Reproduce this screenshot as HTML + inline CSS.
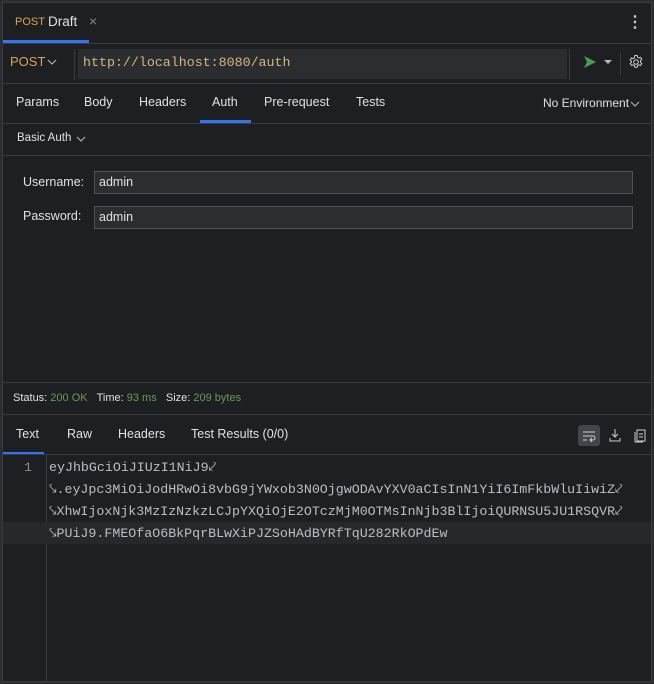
<!DOCTYPE html>
<html><head><style>
*{margin:0;padding:0;box-sizing:border-box}
body{width:654px;height:684px;background:#2b2d30;position:relative;overflow:hidden;font-family:"Liberation Sans",sans-serif;font-size:12.5px;color:#dfe1e5}
#f{position:absolute;left:2px;top:2px;width:650px;height:680px;background:#1e1f22;border:1px solid #393b40}
.a{position:absolute}
.hl{position:absolute;left:0;right:0;height:1px;background:#393b40}
.t{position:absolute;white-space:nowrap}
.mono{font-family:"Liberation Mono",monospace;font-size:13.3px}
.in{position:absolute;left:91px;width:539px;height:23px;background:#2b2d30;border:1px solid #4e5157;padding:3px 0 0 4px;font-size:12.5px}
.g{color:#6a9955}
.cl{position:absolute;left:46px;color:#bcbec4;white-space:nowrap}
</style></head><body><div id="f">
<div class="t" style="left:12px;top:13px;font-size:11px;color:#d5a553">POST</div>
<div class="t" style="left:45px;top:11px;font-size:13.5px">Draft</div>
<div class="t" style="left:86px;top:10px;color:#888;font-size:14px">×</div>
<div class="t" style="left:624px;top:9px;color:#ccc;font-size:16px;font-weight:bold">⋮</div>
<div class="a" style="left:0;top:37px;width:86px;height:3px;background:#3574f0"></div>
<div class="hl" style="top:40px"></div>
<div class="t" style="left:7px;top:51px;font-size:13px;color:#d5a553">POST</div>
<svg class="a" style="left:44px;top:55px" width="10" height="8"><path d="M1 2l4 4 4-4" stroke="#bbb" fill="none"/></svg>
<div class="a" style="left:71px;top:46px;width:1px;height:31px;background:#393b40"></div>
<div class="a" style="left:75px;top:46px;width:489px;height:30px;background:#2b2d30"></div>
<div class="t mono" style="left:80px;top:52px;color:#d5b77a">http://localhost:8080/auth</div>
<div class="a" style="left:566px;top:46px;width:1px;height:31px;background:#393b40"></div>
<svg class="a" style="left:580px;top:52px" width="14" height="14"><path d="M1 1L13 7L1 13L4 7Z" fill="#499c54"/></svg>
<svg class="a" style="left:601px;top:57px" width="8" height="5"><path d="M0 0h8L4 4z" fill="#bbb"/></svg>
<div class="a" style="left:617px;top:50px;width:1px;height:22px;background:#393b40"></div>
<svg class="a" style="left:625px;top:51px" width="16" height="16" viewBox="0 0 16 16"><circle cx="8" cy="8" r="2.3" fill="none" stroke="#ccc"/><path d="M6.8 1.5h2.4l.4 1.8 1.3.7 1.7-.7 1.2 2.1-1.3 1.2v1.6l1.3 1.2-1.2 2.1-1.7-.7-1.3.7-.4 1.8H6.8l-.4-1.8-1.3-.7-1.7.7-1.2-2.1 1.3-1.2V7.2L2.2 6l1.2-2.1 1.7.7 1.3-.7z" fill="none" stroke="#ccc"/></svg>
<div class="hl" style="top:80px"></div>
<div class="t" style="left:13px;top:92px">Params</div>
<div class="t" style="left:81px;top:92px">Body</div>
<div class="t" style="left:136px;top:92px">Headers</div>
<div class="t" style="left:209px;top:92px">Auth</div>
<div class="t" style="left:261px;top:92px">Pre-request</div>
<div class="t" style="left:353px;top:92px">Tests</div>
<div class="t" style="left:540px;top:93px;font-size:12px">No Environment</div>
<svg class="a" style="left:627px;top:97px" width="10" height="8"><path d="M1 2l4 4 4-4" stroke="#bbb" fill="none"/></svg>
<div class="a" style="left:197px;top:117px;width:51px;height:3px;background:#3574f0"></div>
<div class="hl" style="top:120px"></div>
<div class="t" style="left:14px;top:129px;font-size:11.5px">Basic Auth</div>
<svg class="a" style="left:73px;top:132px" width="10" height="8"><path d="M1 2l4 4 4-4" stroke="#bbb" fill="none"/></svg>
<div class="hl" style="top:152px"></div>
<div class="t" style="left:20px;top:172px">Username:</div>
<div class="in" style="top:168px">admin</div>
<div class="t" style="left:20px;top:206px">Password:</div>
<div class="in" style="top:203px">admin</div>
<div class="hl" style="top:379px"></div>
<div class="t" style="left:10px;top:389px;font-size:11px">Status: <span class="g">200 OK</span>&nbsp;&nbsp; Time: <span class="g">93 ms</span>&nbsp;&nbsp; Size: <span class="g">209 bytes</span></div>
<div class="hl" style="top:411px"></div>
<div class="t" style="left:13px;top:424px">Text</div>
<div class="t" style="left:64px;top:424px">Raw</div>
<div class="t" style="left:115px;top:424px">Headers</div>
<div class="t" style="left:188px;top:424px">Test Results (0/0)</div>
<div class="a" style="left:575px;top:422px;width:22px;height:21px;background:#43454a;border-radius:3px"></div>
<svg class="a" style="left:578px;top:425px" width="16" height="16"><path d="M2 4h12M2 8h10a2 2 0 010 4H9M11 10l-2 2 2 2M2 12h4" stroke="#ccc" fill="none"/></svg>
<svg class="a" style="left:605px;top:425px" width="14" height="14"><path d="M7 1v8M4 6l3 3 3-3M2 10v3h10v-3" stroke="#ccc" fill="none"/></svg>
<svg class="a" style="left:630px;top:424px" width="14" height="16"><path d="M4 3h8v11H4zM2 5v10h8" stroke="#ccc" fill="none"/><path d="M6 7h4M6 10h4" stroke="#ccc"/></svg>
<div class="a" style="left:0;top:449px;width:41px;height:3px;background:#3574f0"></div>
<div class="hl" style="top:451px"></div>
<div class="a" style="left:43px;top:452px;width:1px;height:227px;background:#393b40"></div>
<div class="a" style="left:0;top:519px;width:648px;height:22px;background:#26282b"></div>
<div class="t mono" style="left:21px;top:457px;color:#8c8e94">1</div>
<div class="cl mono" style="top:457px">eyJhbGciOiJIUzI1NiJ9⤦</div>
<div class="cl mono" style="top:479px">⤥.eyJpc3MiOiJodHRwOi8vbG9jYWxob3N0OjgwODAvYXV0aCIsInN1YiI6ImFkbWluIiwiZ⤦</div>
<div class="cl mono" style="top:501px">⤥XhwIjoxNjk3MzIzNzkzLCJpYXQiOjE2OTczMjM0OTMsInNjb3BlIjoiQURNSU5JU1RSQVR⤦</div>
<div class="cl mono" style="top:523px">⤥PUiJ9.FMEOfaO6BkPqrBLwXiPJZSoHAdBYRfTqU282RkOPdEw</div>
</div></body></html>
